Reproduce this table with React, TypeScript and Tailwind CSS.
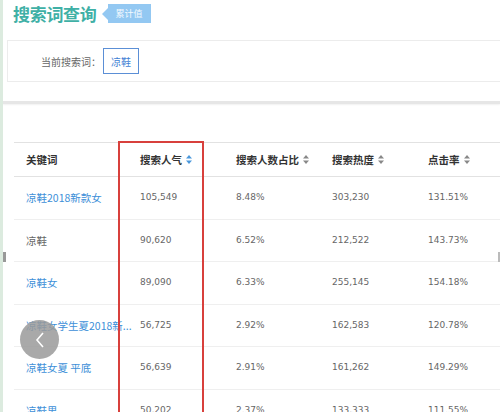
const rows = [
  { k: '凉鞋2018新款女', a: '105,549', b: '8.48%', c: '303,230', d: '131.51%', link: true },
  { k: '凉鞋', a: '90,620', b: '6.52%', c: '212,522', d: '143.73%', link: false },
  { k: '凉鞋女', a: '89,090', b: '6.33%', c: '255,145', d: '154.18%', link: true },
  { k: '凉鞋女学生夏2018新...', a: '56,725', b: '2.92%', c: '162,583', d: '120.78%', link: true },
  { k: '凉鞋女夏 平底', a: '56,639', b: '2.91%', c: '161,262', d: '149.29%', link: true },
  { k: '凉鞋男', a: '50,202', b: '2.37%', c: '133,333', d: '111.55%', link: true },
]

function SortIcon({ active }: { active?: boolean }) {
  const fill = active ? '#4a98dc' : '#888'
  return (
    <svg width="6" height="9" viewBox="0 0 6 9" className="ml-[4px]">
      <path d="M3 0 L6 3.5 L0 3.5 Z" fill={fill} />
      <path d="M3 9 L6 5.5 L0 5.5 Z" fill={fill} />
    </svg>
  )
}

export default function App() {
  return (
    <div className="relative w-[500px] h-[412px] overflow-hidden bg-white border-l-[3px] border-[#dcebdf] font-['Noto_Sans_CJK_SC','Liberation_Sans',sans-serif]">
      {/* title */}
      <div className="h-[40px] flex items-start pt-[3px] pl-[10px]">
        <h1 className="text-[17px] leading-[22px] font-bold text-[#3fb0a6] tracking-[-0.3px]">搜索词查询</h1>
        <div className="flex items-center ml-[5px] mt-[1px]">
          <div className="w-0 h-0 border-y-[6px] border-y-transparent border-r-[6px] border-r-[#93c8f2]" />
          <span className="bg-[#93c8f2] text-white/90 text-[9px] leading-[19px] px-[8px]">累计值</span>
        </div>
      </div>

      {/* current search term */}
      <div className="ml-[4px] h-[42px] border border-r-0 border-[#ececec] flex items-center pl-[33px]">
        <span className="text-[10px] text-[#666]">当前搜索词：</span>
        <span className="ml-[2px] h-[26px] px-[7px] border border-[#5b8fd6] flex items-center text-[10px] text-[#3f7fd4]">凉鞋</span>
      </div>

      <div className="h-[19px]" />
      <div className="h-[3px] bg-[#e6e6e6] shadow-[0_1px_2px_rgba(0,0,0,0.06)]" />

      {/* table */}
      <div className="pt-[38px] pl-[11px]">
        <div className="relative w-[600px]">
          <div className="flex h-[35px] items-center border-y border-[#e2e2e2] text-[10.5px] font-bold text-[#333]">
            <div className="w-[104px] pl-[12px]">关键词</div>
            <div className="w-[96px] pl-[22px] flex items-center">搜索人气<SortIcon active /></div>
            <div className="w-[96px] pl-[22px] flex items-center">搜索人数占比<SortIcon /></div>
            <div className="w-[96px] pl-[22px] flex items-center">搜索热度<SortIcon /></div>
            <div className="w-[96px] pl-[22px] flex items-center">点击率<SortIcon /></div>
          </div>
          {rows.map((r) => (
            <div key={r.k} className="flex h-[42.6px] items-center border-b border-[#efefef] text-[10.5px] text-[#666]">
              <div className={`w-[104px] pl-[12px] whitespace-nowrap ${r.link ? 'text-[#3d8fd8]' : 'text-[#666]'}`}>{r.k}</div>
              <div className="w-[96px] pl-[22px] font-['DejaVu_Sans',sans-serif] text-[9px]">{r.a}</div>
              <div className="w-[96px] pl-[22px] font-['DejaVu_Sans',sans-serif] text-[9px]">{r.b}</div>
              <div className="w-[96px] pl-[22px] font-['DejaVu_Sans',sans-serif] text-[9px]">{r.c}</div>
              <div className="w-[96px] pl-[22px] font-['DejaVu_Sans',sans-serif] text-[9px]">{r.d}</div>
            </div>
          ))}
          {/* red highlight annotation */}
          <div className="absolute left-[104px] top-[-1px] w-[86px] h-[320px] border-2 border-[#d8403c]" />
        </div>
      </div>

      {/* carousel back button */}
      <div className="absolute left-[17px] top-[320px] w-[39px] h-[39px] rounded-full bg-[#9a9a9a]/85 flex items-center justify-center">
        <svg width="12" height="18" viewBox="0 0 12 18">
          <path d="M9 2 L3 9 L9 16" stroke="white" strokeWidth="1.6" fill="none" />
        </svg>
      </div>
      <div className="absolute left-0 top-[252px] w-[3px] h-[10px] bg-[#999]" />
      <div className="absolute right-0 top-[252px] w-[2px] h-[10px] bg-[#bbb]" />
    </div>
  )
}
